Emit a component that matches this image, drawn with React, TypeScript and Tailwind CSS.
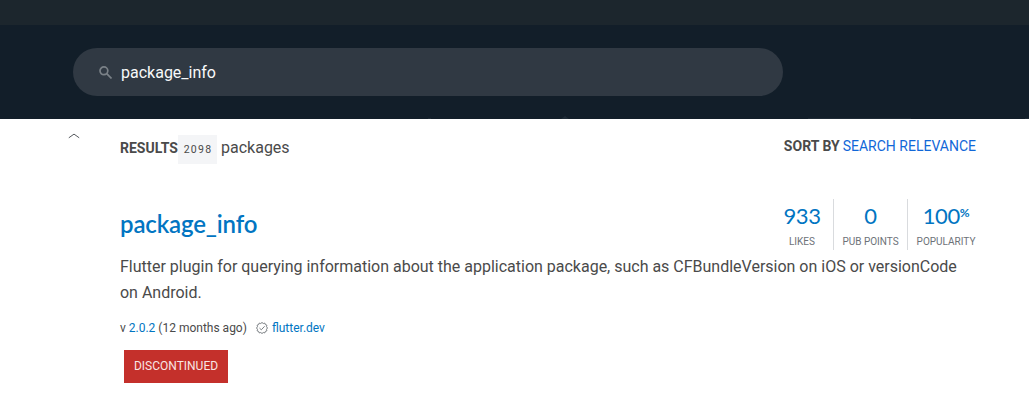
import React from "react";

function SearchBar() {
  return (
    <div className="h-[94px] shrink-0 overflow-hidden bg-[#121e29] pl-[73px] pt-[23px]">
      <div className="flex h-12 w-[710px] items-center rounded-full bg-[#303943] pl-[26px]">
        <svg className="mr-[9px] h-[13px] w-[13px] shrink-0" viewBox="0 0 13 13" fill="none" stroke="#7a8187" strokeWidth="1.7">
          <circle cx="4.9" cy="4.8" r="3.9" />
          <path d="M7.7 7.7 12.5 12.5" />
        </svg>
        <span className="pt-0.5 text-[16px] leading-6 text-[#f8f9fa]">package_info</span>
      </div>
      <svg className="mt-[20px] -ml-[73px] block h-[3px] w-[1029px]" viewBox="0 0 1029 3" fill="#1f2b36">
        <path d="M561 3 565 0 569 3ZM428 3V2H431V3ZM808 2H911V3H808ZM1025 2H1029V3H1025Z" />
      </svg>
    </div>
  );
}

function Score({ value, suffix, label, className }: { value: string; suffix?: string; label: string; className: string }) {
  return (
    <div className={"flex h-[51px] flex-col items-center " + className}>
      <div className="flex h-9 items-start pt-1 font-['Lato','Liberation_Sans',sans-serif] text-[22px] leading-[26px] tracking-[-0.4px] text-[#0175c2]">
        <span>{value}</span>
        {suffix && <span className="text-[12px] font-bold leading-[20px]">{suffix}</span>}
      </div>
      <div className="whitespace-nowrap text-[10px] leading-[14px] text-[#6d7278]">{label}</div>
    </div>
  );
}

export default function App() {
  return (
    <div className="flex h-[405px] w-[1029px] flex-col overflow-hidden bg-white font-['Roboto','Liberation_Sans',sans-serif] text-[#4a4a4a]">
      <div className="h-[25px] shrink-0 bg-[#1c262d]" />
      <SearchBar />
      <div className="flex flex-1">
        <div className="w-[120px] shrink-0 pl-[68px] pt-[14px]">
          <svg className="h-[6px] w-3" viewBox="0 0 12 6" fill="none" stroke="#55595e" strokeWidth="1">
            <path d="M.8 4.8 6 1.1 11.2 4.8" />
          </svg>
        </div>
        <main className="w-[856px] shrink-0">
          <div className="flex h-[80px] items-start justify-between pt-4">
            <div className="flex h-[29px] items-center whitespace-nowrap">
              <b className="w-[58px] pb-[3px] text-[14px] font-bold leading-5">RESULTS</b>
              <span className="flex h-[29px] w-[39px] items-center justify-center bg-[#f4f5f7] pl-px text-[10.5px] tracking-[1.25px] text-[#4a4a4a]">
                2098
              </span>
              <span className="ml-1 pb-[3px] text-[16px] leading-6">packages</span>
            </div>
            <div className="flex gap-[3px] whitespace-nowrap pt-px text-[14px] leading-5">
              <b className="font-bold">SORT BY</b>
              <span className="text-[#1167d8]">SEARCH RELEVANCE</span>
            </div>
          </div>
          <div className="flex justify-between">
            <h2 className="pt-[9px] font-['Lato','Liberation_Sans',sans-serif] text-[24px] font-semibold leading-[32px] tracking-[-0.15px] text-[#0175c2]">
              package_info
            </h2>
            <div className="flex">
              <Score value="933" label="LIKES" className="w-[63px] pl-px" />
              <Score value="0" label="PUB POINTS" className="w-[75px] border-x border-[#d9dbde]" />
              <Score value="100" suffix="%" label="POPULARITY" className="w-[68px] pl-2" />
            </div>
          </div>
          <p className="mt-1 whitespace-nowrap text-[16px] leading-[26px] tracking-[-0.005px]">
            Flutter plugin for querying information about the application package, such as CFBundleVersion on iOS or versionCode
            <br />
            on Android.
          </p>
          <div className="mt-3 flex h-5 items-center whitespace-nowrap text-[12px] leading-5">
            <span>
              v <span className="text-[#0175c2]">2.0.2</span> (12 months ago)
            </span>
            <svg className="ml-[9px] mr-1 h-3 w-3" viewBox="0 0 12 12" fill="none" stroke="#6b7075" strokeWidth=".9">
              <path d="M6 .5 7.3 1.5 8.8 1.1 9.4 2.6 10.9 3.2 10.5 4.7 11.5 6 10.5 7.3 10.9 8.8 9.4 9.4 8.8 10.9 7.3 10.5 6 11.5 4.7 10.5 3.2 10.9 2.6 9.4 1.1 8.8 1.5 7.3.5 6 1.5 4.7 1.1 3.2 2.6 2.6 3.2 1.1 4.7 1.5Z" />
              <path d="M3.5 6.1 5.3 7.8 8.6 4.3" />
            </svg>
            <span className="text-[#0175c2]">flutter.dev</span>
          </div>
          <div className="ml-1 mt-3 flex h-[33px] w-[104px] items-center justify-center bg-[#c4302b] pb-0.5 text-[12px] text-[#f8e5e4]">
            DISCONTINUED
          </div>
        </main>
      </div>
    </div>
  );
}
